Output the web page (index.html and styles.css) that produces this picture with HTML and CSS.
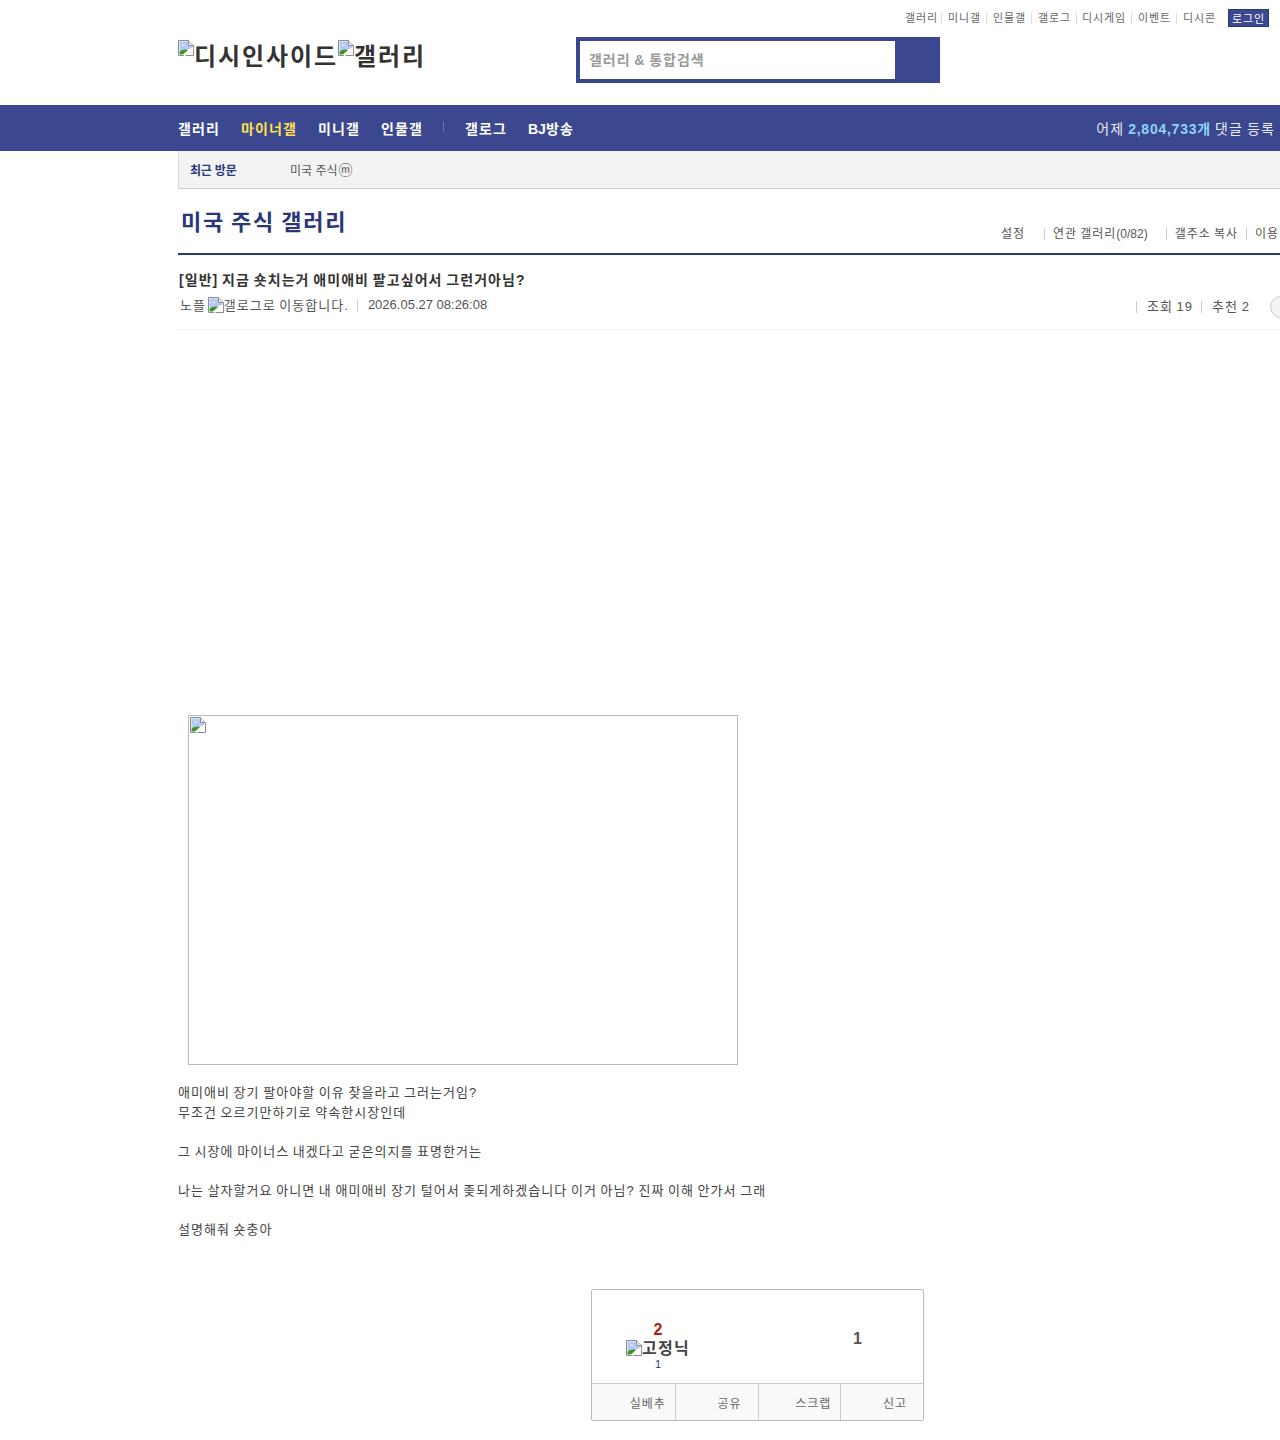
FILE: index.html
```html
<!DOCTYPE html>
<html lang="ko">
<head>
  <meta charset="UTF-8">
  <title>지금 숏치는거 애미애비 팔고싶어서 그런거아님? - 미국 주식 갤러리</title>
  <link rel="stylesheet" href="styles.css">
</head>
<body>
  <svg class="defs" width="0" height="0">
    <symbol id="broken" viewBox="0 0 16 16">
      <path d="M.5.5h10l5 5v10H.5z" fill="#fff" stroke="#8c8c8c"/>
      <path d="M1.500 1.500H10V6h4.500v2L1.500 12z" fill="#b4caf2"/>
      <path d="M3.500 5.500c1-1.500 3-1.500 4 0z" fill="#fff"/>
      <path d="M1.500 14.500V12c2.500-2.500 6-3 8.500-2l-5 4.500z" fill="#3f9225"/>
      <path d="M10.500.5v5h5" fill="#e8e8e8" stroke="#8c8c8c"/>
      <path d="M6 15.500 15 8" stroke="#fff" stroke-width="2"/>
    </symbol>
  </svg>

  <header class="top">
    <div class="top-links">
      <a>갤러리</a><a>미니갤</a><a>인물갤</a><a>갤로그</a><a>디시게임</a><a>이벤트</a><a>디시콘</a>
      <span class="login">로그인</span>
    </div>
    <div class="top-main">
      <div class="logo">
        <svg class="broken"><use href="#broken"/></svg>디시인사이드<svg class="broken"><use href="#broken"/></svg>갤러리
      </div>
      <form class="search">
        <div class="search-input">갤러리 &amp; 통합검색</div>
        <div class="search-btn"></div>
      </form>
    </div>
  </header>

  <nav class="gnb">
    <ul class="gnb-list">
      <li>갤러리</li>
      <li class="on">마이너갤</li>
      <li>미니갤</li>
      <li class="last">인물갤</li>
      <li>갤로그</li>
      <li><span class="num">BJ</span>방송</li>
    </ul>
    <div class="gnb-count">어제 <b class="count-num">2,804,733</b><b>개</b> 댓글 등록</div>
  </nav>

  <div class="wrap">
    <div class="visit">
      <strong>최근 방문</strong>
      <span>미국 주식<i class="mark">ⓜ</i></span>
    </div>

    <div class="page-head">
      <h2>미국 주식 갤러리</h2>
      <ul class="tools">
        <li class="first">설정</li>
        <li class="wide">연관 갤러리<span class="num">(0/82)</span></li>
        <li>갤주소 복사</li>
        <li>이용</li>
      </ul>
    </div>

    <div class="post-head">
      <h3>[일반] 지금 숏치는거 애미애비 팔고싶어서 그런거아님?</h3>
      <div class="post-meta">
        <div class="writer">노플 <svg class="broken small"><use href="#broken"/></svg>갤로그로 이동합니다.</div>
        <div class="date">2026.05.27 08:26:08</div>
        <div class="counts">
          <span class="views">조회 19</span>
          <span>추천 2</span>
          <span class="circle"></span>
        </div>
      </div>
    </div>

    <div class="post-body">
      <div class="pic"><svg class="broken"><use href="#broken"/></svg></div>
      <p>애미애비 장기 팔아야할 이유 찾을라고 그러는거임?<br>
      무조건 오르기만하기로 약속한시장인데<br><br>
      그 시장에 마이너스 내겠다고 굳은의지를 표명한거는<br><br>
      나는 살자할거요 아니면 내 애미애비 장기 털어서 좆되게하겠습니다 이거 아님? 진짜 이해 안가서 그래<br><br>
      설명해줘 숏충아</p>
    </div>

    <div class="rec">
      <div class="rec-top">
        <div class="rec-up">
          <b>2</b>
          <div class="fix"><svg class="broken"><use href="#broken"/></svg>고정닉</div>
          <em>1</em>
        </div>
        <div class="rec-down">1</div>
      </div>
      <div class="rec-btns">
        <div>실베추</div>
        <div>공유</div>
        <div>스크랩</div>
        <div>신고</div>
      </div>
    </div>
  </div>
</body>
</html>
```

FILE: styles.css
```css
* { letter-spacing: .08em; word-spacing: -.08em; }
html { overflow-x: hidden; }
body { margin: 0; font-family: "Liberation Sans", "Noto Sans CJK KR", sans-serif; color: #333; background: #fff; width: 1280px; overflow-x: hidden; }
ul { list-style: none; margin: 0; padding: 0; }
.defs { position: absolute; }
.broken { width: 16px; height: 16px; vertical-align: top; flex: none; }
.num { letter-spacing: 0; word-spacing: 0; }

/* header */
.top { height: 105px; padding-left: 178px; box-sizing: border-box; }
.top-links { display: flex; justify-content: flex-end; align-items: center; height: 27px; padding: 9px 11px 0 0; box-sizing: border-box; font-size: 11px; color: #666; }
.top-links a { padding: 0 5px 0 6px; border-left: 1px solid #ddd; line-height: 11px; }
.top-links a:first-child { border-left: 0; padding-right: 3px; }
.top-links a:nth-child(5) { padding-left: 5px; }
.login { margin-left: 7px; width: 41px; height: 18px; line-height: 18px; text-align: center; background: #3b4890; border: 1px solid #29367c; box-sizing: border-box; color: #fff; }
.top-main { display: flex; padding-top: 10px; }
.logo { width: 398px; height: 40px; padding-top: 3px; box-sizing: border-box; font-size: 24px; font-weight: bold; line-height: 34px; color: #333; white-space: nowrap; }
.search { display: flex; width: 364px; height: 46px; border: 4px solid #3b4890; box-sizing: border-box; background: #3b4890; }
.search-input { width: 315px; background: #fff; padding: 0 9px; box-sizing: border-box; font-size: 14px; font-weight: bold; line-height: 38px; color: #999; letter-spacing: .07em; }
.search-btn { flex: 1; }

/* nav */
.gnb { display: flex; justify-content: space-between; align-items: center; height: 46px; padding: 0 5px 0 178px; background: #3b4890; color: #fff; font-size: 14px; font-weight: bold; }
.gnb-list { display: flex; gap: 21px; }
.gnb-list .on { color: #ffe04c; }
.gnb-list .last { padding-right: 21px; position: relative; }
.gnb-list .last::after { content: ""; position: absolute; right: 0; top: 4px; height: 10px; border-right: 1px solid #6a75ad; }
.gnb-count { font-weight: normal; color: #e6e8f3; }
.gnb-count b { color: #8ed3f7; }
.gnb-count .count-num { letter-spacing: .75px; word-spacing: 0; }

/* content */
.wrap { margin-left: 178px; width: 1160px; }
.visit { display: flex; height: 38px; align-items: center; padding-left: 11px; background: #f3f3f3; border-left: 1px solid #ddd; border-bottom: 1px solid #ccc; box-sizing: border-box; font-size: 12px; color: #555; }
.visit strong { width: 100px; color: #29367c; letter-spacing: -.2px; word-spacing: 0; }
.visit span { letter-spacing: 0; word-spacing: 0; }
.mark { font-style: normal; font-size: 14px; letter-spacing: 0; line-height: 12px; margin-left: 1px; }

.page-head { display: flex; justify-content: space-between; height: 64px; border-bottom: 2px solid #29367c; }
.page-head h2 { margin: 16px 0 0 3px; font-size: 22px; line-height: 36px; color: #29367c; font-weight: bold; }
.tools { display: flex; align-items: center; height: 12px; margin-top: 39px; font-size: 12px; color: #555; width: 337px; }
.tools li { padding: 0 8px; border-left: 1px solid #ccc; line-height: 12px; white-space: nowrap; }
.tools .first { border-left: 0; width: 24px; padding: 0 19px 0 0; }
.tools .wide { padding: 0 18px 0 8px; }

.post-head { height: 75px; border-bottom: 1px solid #eee; box-sizing: border-box; padding-top: 15px; }
.post-head h3 { margin: 0; padding-left: 1px; font-size: 14px; line-height: 20px; color: #333; letter-spacing: .075em; }
.post-meta { display: flex; align-items: center; margin-top: 5px; height: 22px; font-size: 13px; color: #555; }
.writer { padding: 0 8px 0 2px; margin-bottom: 4px; }
.small { vertical-align: -3px; margin-left: -2px; }
.date { padding-left: 10px; border-left: 1px solid #ccc; line-height: 12px; margin-bottom: 2px; letter-spacing: 0; word-spacing: 0; }
.counts { display: flex; align-items: center; margin: 2px 46px 0 auto; }
.counts span { padding: 0 10px; border-left: 1px solid #ccc; line-height: 12px; }
.counts .views { padding-right: 8px; }
.counts .circle { padding: 0; width: 22px; height: 22px; margin-left: 10px; box-sizing: border-box; border: 1px solid #ccc; border-radius: 50%; background: #f3f3f3; }

.post-body { padding-top: 385px; font-size: 13px; line-height: 19.500px; color: #444; }
.pic { width: 550px; height: 350px; margin-left: 10px; border: 1px solid #bbb; box-sizing: border-box; }
.pic .broken { display: block; margin: 1px 0 0 1px; }
.post-body p { margin: 18px 0 0; }

.rec { width: 333px; height: 132px; margin: 50px 0 0 413px; border: 1px solid #bbb; border-radius: 2px; box-sizing: border-box; }
.rec-top { display: flex; height: 93px; border-bottom: 1px solid #ccc; }
.rec-up { width: 132px; padding-top: 30px; text-align: center; box-sizing: border-box; }
.rec-up b { display: block; font-size: 16px; line-height: 20px; color: #b5200e; letter-spacing: 0; }
.fix { font-size: 16px; font-weight: bold; line-height: 18px; color: #444; }
.rec-up em { display: block; font-style: normal; font-size: 11px; line-height: 13px; color: #29367c; letter-spacing: 0; }
.rec-down { margin-left: 129px; padding-top: 40px; font-size: 16px; font-weight: bold; line-height: 18px; color: #555; letter-spacing: 0; }
.rec-btns { display: grid; grid-template-columns: repeat(4, 1fr); height: 36px; background: #f9f9f9; font-size: 12px; color: #666; }
.rec-btns div { padding-right: 9px; height: 36px; line-height: 40px; text-align: right; border-left: 1px solid #ccc; }
.rec-btns div:first-child { border-left: 0; }
.rec-btns div:nth-child(even) { padding-right: 16px; }
```
